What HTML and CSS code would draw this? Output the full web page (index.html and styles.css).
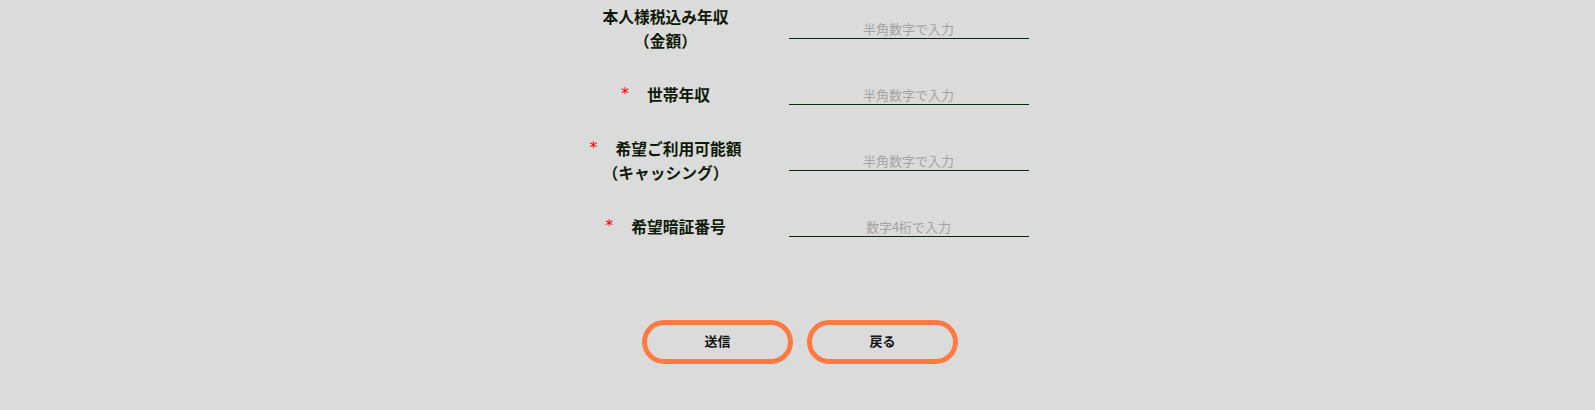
FILE: index.html
```html
<!DOCTYPE html>
<html lang="ja">
<head>
<meta charset="utf-8">
<link rel="stylesheet" href="styles.css">
</head>
<body>
<div class="page">
  <form class="form">
    <div class="row">
      <div class="label">本人様税込み年収<br>（金額）</div>
      <div class="field"><input class="input" type="text" placeholder="半角数字で入力"></div>
    </div>
    <div class="row">
      <div class="label"><span class="req">*</span>世帯年収</div>
      <div class="field"><input class="input" type="text" placeholder="半角数字で入力"></div>
    </div>
    <div class="row">
      <div class="label"><span class="req">*</span>希望ご利用可能額<br>（キャッシング）</div>
      <div class="field"><input class="input" type="text" placeholder="半角数字で入力"></div>
    </div>
    <div class="row">
      <div class="label"><span class="req">*</span>希望暗証番号</div>
      <div class="field"><input class="input" type="text" placeholder="数字4桁で入力"></div>
    </div>
  </form>
  <div class="actions">
    <button class="btn" type="button">送信</button>
    <button class="btn" type="button">戻る</button>
  </div>
</div>
</body>
</html>
```

FILE: styles.css
```css
html, body {
  margin: 0;
  padding: 0;
  background: #dbdbdb;
}
body {
  font-family: "Noto Sans CJK JP", "Noto Sans", sans-serif;
  color: #111;
}
.page {
  padding-top: 5px;
}
.form {
  width: 464px;
  margin: 0 auto;
  display: flex;
  flex-direction: column;
  gap: 30px;
}
.row {
  display: grid;
  grid-template-columns: 200px 240px;
  column-gap: 23px;
  align-items: center;
}
.label {
  text-align: center;
  font-weight: bold;
  font-size: 15.75px;
  line-height: 24px;
  color: #0e1a08;
}
.req {
  color: #ff0000;
  font-weight: normal;
  font-family: "DejaVu Sans", sans-serif;
  font-size: 16px;
  line-height: 0;
  margin-right: 18px;
  position: relative;
  top: -2px;
}
.field {
  display: flex;
}
.input {
  width: 240px;
  height: 20px;
  box-sizing: border-box;
  border: none;
  border-bottom: 1px solid #0b2a0b;
  background: transparent;
  text-align: center;
  font-family: "Noto Sans CJK JP", sans-serif;
  font-size: 13px;
  padding: 0;
  outline: none;
}
.input::placeholder {
  color: #a3a3a3;
}
.actions {
  margin-top: 81px;
  display: flex;
  justify-content: center;
  gap: 14px;
  padding-left: 5px;
}
.btn {
  width: 151px;
  height: 44px;
  box-sizing: border-box;
  border: 5px solid #ff7a40;
  border-radius: 22px;
  background: transparent;
  font-family: "Noto Sans CJK JP", sans-serif;
  font-weight: bold;
  font-size: 13px;
  color: #111;
  padding: 0 0 3px;
}
```
